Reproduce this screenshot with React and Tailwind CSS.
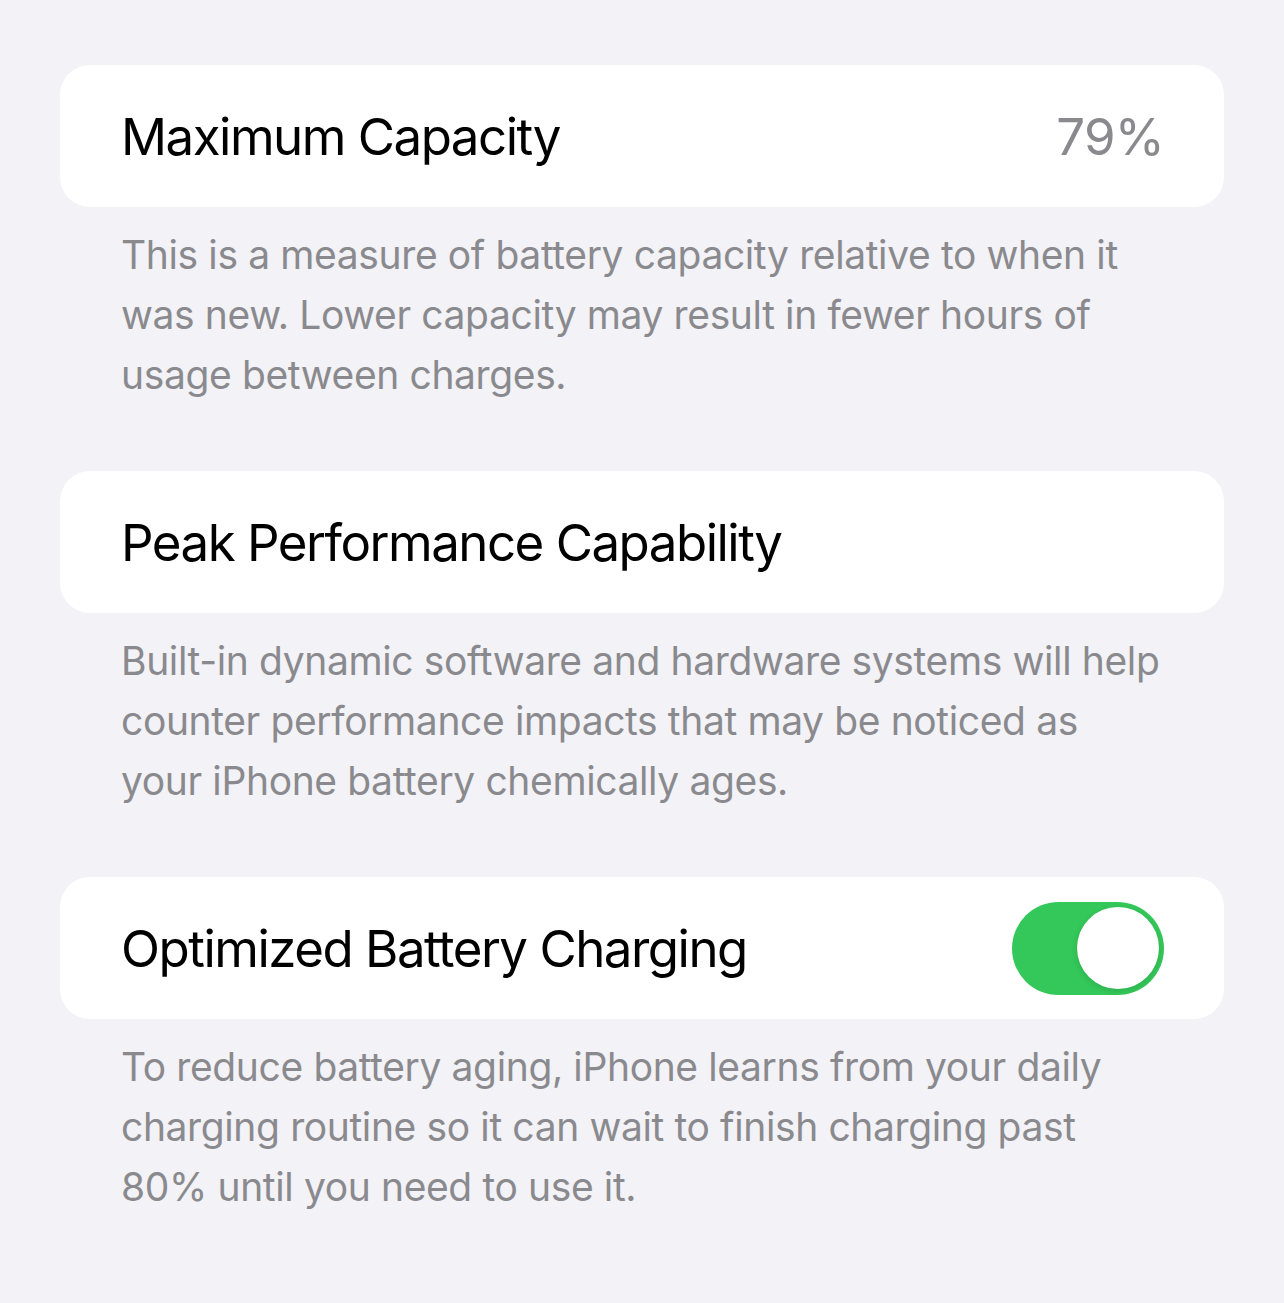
import { useState } from 'react';

const sections = [
  {
    title: 'Maximum Capacity',
    value: '79%',
    note: [
      'This is a measure of battery capacity relative to when it',
      'was new. Lower capacity may result in fewer hours of',
      'usage between charges.',
    ],
  },
  {
    title: 'Peak Performance Capability',
    note: [
      'Built-in dynamic software and hardware systems will help',
      'counter performance impacts that may be noticed as',
      'your iPhone battery chemically ages.',
    ],
  },
  {
    title: 'Optimized Battery Charging',
    toggle: true,
    note: [
      'To reduce battery aging, iPhone learns from your daily',
      'charging routine so it can wait to finish charging past',
      '80% until you need to use it.',
    ],
  },
];

function Toggle({ on, onChange }) {
  return (
    <button
      onClick={() => onChange(!on)}
      className={`flex h-[93px] w-[152px] items-center rounded-full p-[5px] ${
        on ? 'justify-end bg-[#34c759]' : 'justify-start bg-[#e9e9eb]'
      }`}
    >
      <span className="block h-[82px] w-[82px] rounded-full bg-white shadow-[0_2px_6px_rgba(0,0,0,0.12)]" />
    </button>
  );
}

export default function App() {
  const [optimized, setOptimized] = useState(true);

  return (
    <div
      className="min-h-[1303px] w-full bg-[#f2f2f7] px-[60px] pt-[65px]"
      style={{ fontFamily: 'Inter, "Noto Sans", sans-serif' }}
    >
      {sections.map((s) => (
        <section key={s.title} className="mb-[66px]">
          <div className="flex h-[142px] items-center justify-between rounded-[30px] bg-white pl-[61px] pr-[60px]">
            <span className="text-[51px] leading-none tracking-[-1.5px] text-black">{s.title}</span>
            {s.value && (
              <span className="text-[51px] leading-none tracking-[-0.8px] text-[#8a8a8e]">{s.value}</span>
            )}
            {s.toggle && <Toggle on={optimized} onChange={setOptimized} />}
          </div>
          <p className="pl-[61px] pt-[18px] text-[39px] leading-[60px] tracking-[-0.38px] text-[#8a8a8e]">
            {s.note.map((line) => (
              <span key={line} className="block whitespace-nowrap">
                {line}
              </span>
            ))}
          </p>
        </section>
      ))}
    </div>
  );
}
